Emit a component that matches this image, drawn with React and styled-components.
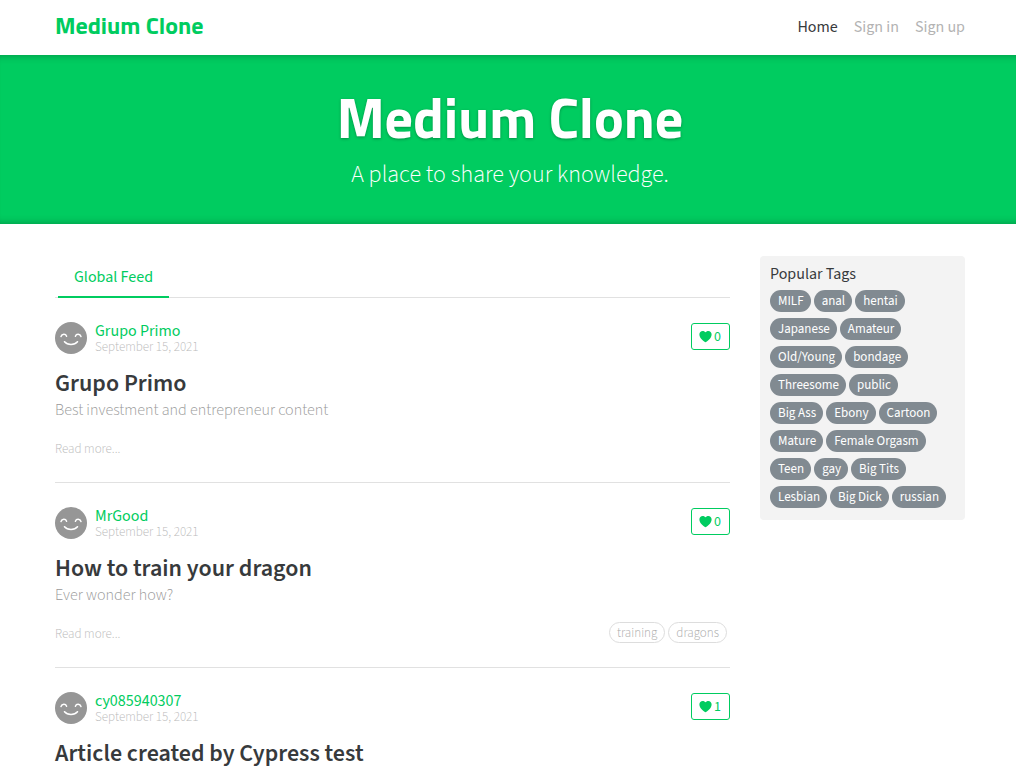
import React from "react";
import styled, { createGlobalStyle } from "styled-components";
import { IoHeart } from "react-icons/io5";

const green = "#00cc60";

const GlobalStyle = createGlobalStyle`
  *, *::before, *::after { box-sizing: border-box; }
  body {
    margin: 0;
    background: #fff;
    color: #373a3c;
    font-family: "Source Sans 3", "Noto Sans CJK SC", "Liberation Sans", sans-serif;
    font-size: 16px;
    line-height: 24px;
  }
  a { color: inherit; text-decoration: none; }
  h1, h2, p, ul { margin: 0; padding: 0; }
  ul { list-style: none; }
`;

const Container = styled.div`
  padding: 0 51px 0 55px;
`;

const NavBar = styled(Container).attrs({ as: "nav" })`
  display: flex;
  align-items: center;
  justify-content: space-between;
  height: 55px;
  padding-bottom: 2px;
`;

const Brand = styled.a`
  padding-bottom: 4px;
  color: ${green};
  font-family: "Titillium Web", "Noto Sans", sans-serif;
  font-size: 24px;
  font-weight: 700;
`;

const NavList = styled.ul`
  display: flex;
  gap: 16px;
`;

const NavLink = styled.a`
  color: ${(p) => (p.$active ? "#373a3c" : "#b3b3b3")};
`;

const Hero = styled.header`
  padding: 32px 0 30px;
  background: ${green};
  box-shadow: inset 0 8px 8px -8px rgba(0, 0, 0, 0.3), inset 0 -8px 8px -8px rgba(0, 0, 0, 0.3);
  color: #fff;
  text-align: center;
`;

const HeroTitle = styled.h1`
  margin-bottom: 8px;
  font-family: "Titillium Web", "Noto Sans", sans-serif;
  font-size: 56px;
  font-weight: 700;
  line-height: 61px;
  text-shadow: 0 1px 3px rgba(0, 0, 0, 0.3);
`;

const HeroText = styled.p`
  font-size: 24px;
  font-weight: 300;
  line-height: 38px;
`;

const Page = styled(Container).attrs({ as: "main" })`
  display: grid;
  grid-template-columns: minmax(0, 1fr) 205px;
  gap: 30px;
  align-items: start;
  padding-top: 32px;
`;

const Tabs = styled.div`
  display: flex;
  height: 42px;
  margin-bottom: -1px;
  padding-left: 3px;
`;

const Tab = styled.a`
  padding: 9px 16px 7px;
  border-bottom: 2px solid ${green};
  color: ${green};
`;

const Article = styled.article`
  padding: 24px 0;
  border-top: 1px solid #e1e1e1;
`;

const Meta = styled.div`
  display: flex;
  align-items: flex-start;
  gap: 8px;
  height: 32px;
  margin-bottom: 16px;
`;

const Info = styled.div`
  display: flex;
  flex: 1;
  flex-direction: column;
`;

const Author = styled.a`
  color: ${green};
  line-height: 18px;
`;

const PostDate = styled.time`
  color: #bbb;
  font-size: 13px;
  font-weight: 300;
  line-height: 15px;
`;

const LikeButton = styled.button`
  display: flex;
  align-items: center;
  gap: 1px;
  min-width: 39px;
  height: 27px;
  margin-top: 1px;
  padding: 0 6px;
  border: 1px solid ${green};
  border-radius: 3px;
  background: #fff;
  color: ${green};
  font-family: inherit;
  font-size: 14px;
`;

const Title = styled.h2`
  font-size: 24px;
  font-weight: 600;
  line-height: 28px;
`;

const Description = styled.p`
  margin-bottom: 16px;
  color: #999;
  font-weight: 300;
`;

const ArticleFooter = styled.div`
  display: flex;
  align-items: flex-end;
  justify-content: space-between;
  height: 20px;
`;

const ReadMore = styled.a`
  color: #bbb;
  font-size: 13px;
  font-weight: 300;
  line-height: 18px;
`;

const TagList = styled.ul`
  display: flex;
  flex-wrap: wrap;
  gap: 6px 3px;
  padding-right: ${(p) => (p.$outline ? "3px" : "6px")};
`;

const Tag = styled.a`
  display: block;
  height: 22px;
  padding: 0 7px 0 8px;
  border-radius: 11px;
  background: #818a91;
  color: #fff;
  font-size: 13px;
  line-height: 22px;
`;

const OutlineTag = styled(Tag)`
  height: 21px;
  padding: 0 7px;
  border: 1px solid #ddd;
  background: transparent;
  color: #aaa;
  font-weight: 300;
  line-height: 20px;
`;

const Sidebar = styled.aside`
  padding: 6px 10px 12px;
  border-radius: 4px;
  background: #f3f3f3;
`;

const SidebarTitle = styled.p`
  margin-bottom: 4px;
`;

const posts = [
  { author: "Grupo Primo", title: "Grupo Primo", text: "Best investment and entrepreneur content", likes: 0, tags: [] },
  { author: "MrGood", title: "How to train your dragon", text: "Ever wonder how?", likes: 0, tags: ["training", "dragons"] },
  { author: "cy085940307", title: "Article created by Cypress test", likes: 1, tags: [] },
];

const popularTags = [
  "MILF", "anal", "hentai", "Japanese", "Amateur", "Old/Young", "bondage",
  "Threesome", "public", "Big Ass", "Ebony", "Cartoon", "Mature",
  "Female Orgasm", "Teen", "gay", "Big Tits", "Lesbian", "Big Dick", "russian",
];

function Avatar() {
  return (
    <svg width="32" height="32" viewBox="0 0 32 32" aria-hidden="true">
      <circle cx="16" cy="16" r="16" fill="#969696" />
      <g fill="none" stroke="#fff" strokeWidth="1.5" strokeLinecap="round">
        <path d="M6 14.6C7 11.6 10.600 11.600 11.600 14.200" />
        <path d="M20.400 14.200C21.400 11.600 25 11.600 26 14.600" />
        <path d="M9.500 19.700C12.500 23.400 19.500 23.400 22.500 19.700" />
      </g>
    </svg>
  );
}

function Post({ post }) {
  return (
    <Article>
      <Meta>
        <Avatar />
        <Info>
          <Author href="#">{post.author}</Author>
          <PostDate dateTime="2021-09-15">September 15, 2021</PostDate>
        </Info>
        <LikeButton type="button">
          <IoHeart size={15} aria-hidden="true" />
          {post.likes}
        </LikeButton>
      </Meta>
      <Title>{post.title}</Title>
      {post.text && (
        <>
          <Description>{post.text}</Description>
          <ArticleFooter>
            <ReadMore href="#">Read more...</ReadMore>
            <TagList $outline>
              {post.tags.map((tag) => (
                <li key={tag}><OutlineTag href="#">{tag}</OutlineTag></li>
              ))}
            </TagList>
          </ArticleFooter>
        </>
      )}
    </Article>
  );
}

export default function App() {
  return (
    <>
      <GlobalStyle />
      <NavBar>
        <Brand href="#">Medium Clone</Brand>
        <NavList>
          <li><NavLink href="#" $active>Home</NavLink></li>
          <li><NavLink href="#">Sign in</NavLink></li>
          <li><NavLink href="#">Sign up</NavLink></li>
        </NavList>
      </NavBar>
      <Hero>
        <Container>
          <HeroTitle>Medium Clone</HeroTitle>
          <HeroText>A place to share your knowledge.</HeroText>
        </Container>
      </Hero>
      <Page>
        <section>
          <Tabs><Tab href="#">Global Feed</Tab></Tabs>
          {posts.map((post) => <Post key={post.author} post={post} />)}
        </section>
        <Sidebar>
          <SidebarTitle>Popular Tags</SidebarTitle>
          <TagList>
            {popularTags.map((tag) => (
              <li key={tag}><Tag href="#">{tag}</Tag></li>
            ))}
          </TagList>
        </Sidebar>
      </Page>
    </>
  );
}
